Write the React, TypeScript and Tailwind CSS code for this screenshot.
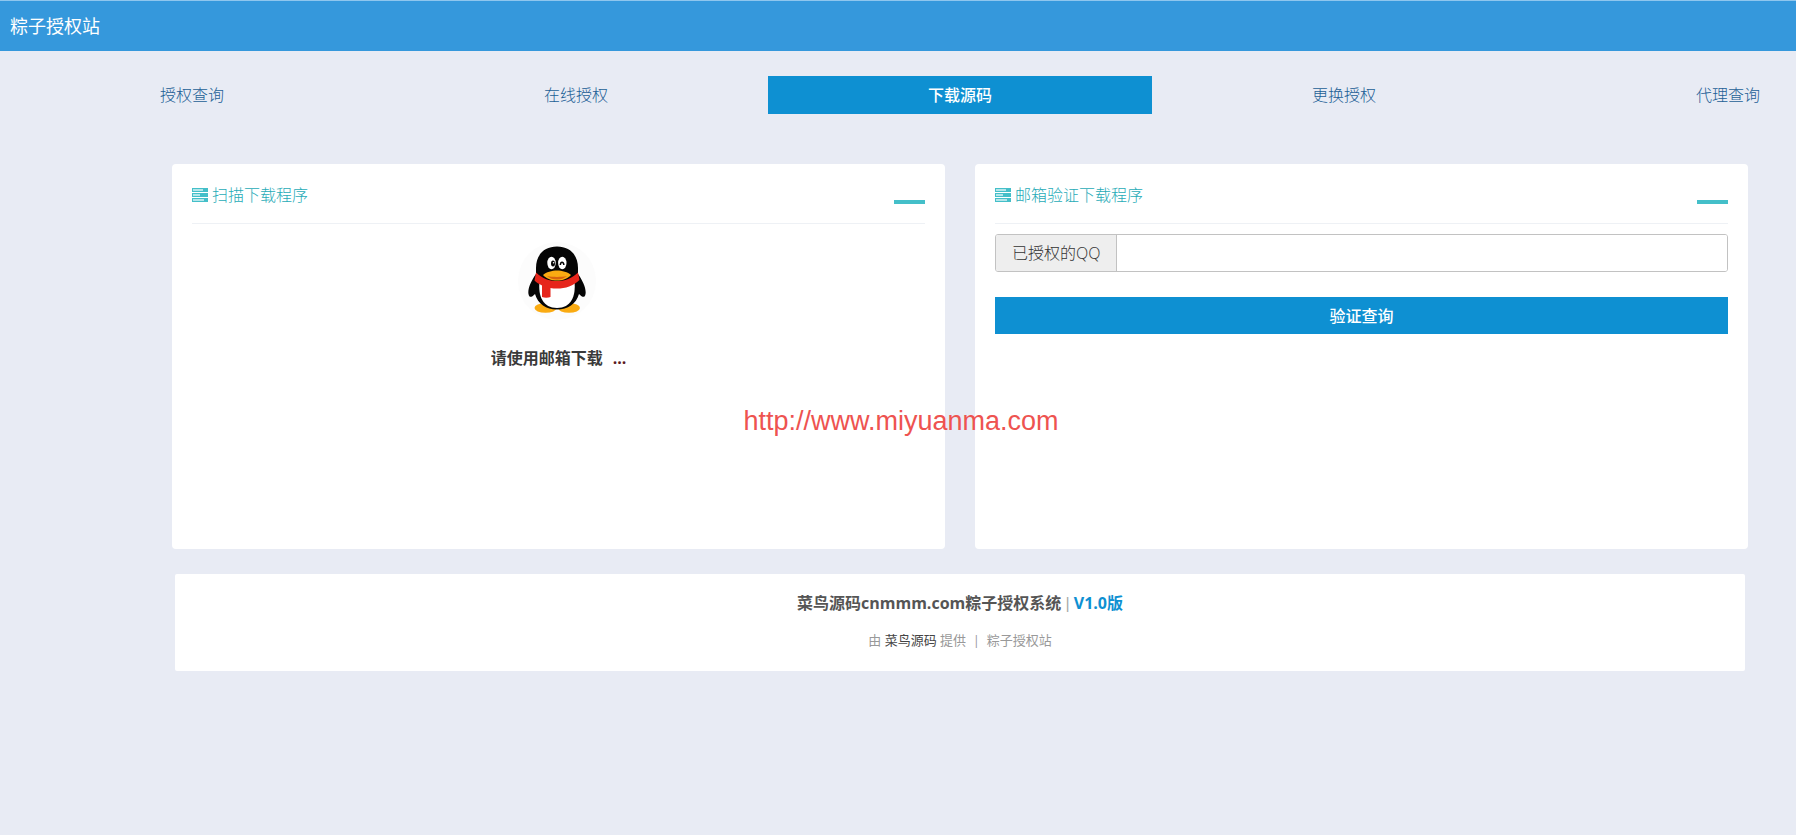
import type { ReactNode } from "react";

const tabs = ["授权查询", "在线授权", "下载源码", "更换授权", "代理查询"];

function TasksIcon() {
  return (
    <svg viewBox="0 0 16 14" className="h-[14px] w-4 shrink-0" aria-hidden="true" shapeRendering="crispEdges">
      <path fill="#44bfc9" d="M0 0h16v4H0zM0 5h16v4H0zM0 10h16v4H0z" />
      <path fill="#b4e6ea" d="M1 1h10v2H1zM1 6h7v2H1zM1 11h11v2H1z" />
    </svg>
  );
}

function Penguin() {
  return (
    <svg viewBox="2 0 84 82" className="h-[82px] w-[84px]" role="img" aria-label="QQ">
      <circle cx="42" cy="41" r="39" fill="#fcfcfc" />
      <ellipse cx="30.500" cy="68" rx="11" ry="4.800" fill="#faab12" />
      <ellipse cx="54" cy="68" rx="11" ry="4.800" fill="#faab12" />
      <path
        fill="#050505"
        d="M42 6.500C29 6.500 21 15 21 28v6C16 41 12.500 49 13.500 54c.6 3.500 2.600 4 6.500 0C23 64 31 69.500 42 69.500S61 64 64 54c4 4 6 3.500 6.500 0C71.500 49 68 41 63 34v-6C63 15 55 6.500 42 6.500z"
      />
      <path fill="#fff" d="M24.500 42C23 56 28 68 42 68s19-12 17.500-26z" />
      <ellipse cx="36.500" cy="23" rx="4.200" ry="6.200" fill="#fff" />
      <ellipse cx="47.300" cy="23" rx="4.200" ry="6.200" fill="#fff" />
      <ellipse cx="38" cy="23.500" rx="2" ry="2.900" fill="#050505" />
      <circle cx="38.600" cy="22.800" r=".8" fill="#fff" />
      <path d="M45.300 25c.4-3.600 3-3.600 3.600 0" fill="none" stroke="#050505" strokeWidth="1.500" />
      <path fill="#faab12" d="M28 35c3-3 9-4.500 14-4.500S53 32 56 35c-3 3.500-8 5.500-14 5.500S31 38.500 28 35z" />
      <path fill="#d8640f" d="M32 36c6 1.200 14 1.200 20 0-3 2.500-6 3.500-10 3.500s-7-1-10-3.500z" />
      <path
        fill="#e6251b"
        d="M21 32.500c6 6 13 8.500 21 8.500s15-2.500 21-8.500l1.500 7.500c-6 6-14 8.500-22.500 8.500-2 0-5 0-6.500-.5v9c-2.500 1-6 1-8.500 0V45.500c-3-1.500-5.500-3-7.500-5z"
      />
    </svg>
  );
}

function Panel({ title, children }: { title: string; children: ReactNode }) {
  return (
    <section className="min-h-[385px] flex-1 rounded-[4px] bg-white px-5 pt-3">
      <div className="flex h-12 items-start justify-between border-b border-[#eef1f5] pt-[7px]">
        <h2 className="flex items-center gap-1 text-[16px] leading-6 font-light text-[#1fabb7]">
          <TasksIcon />
          {title}
        </h2>
        <span className="mt-[17px] h-1 w-[31px] bg-[#44bfc9]" />
      </div>
      {children}
    </section>
  );
}

function Divider() {
  return <span className="font-['Liberation_Sans',sans-serif] text-[#aaa]">|</span>;
}

export default function App() {
  return (
    <div className="relative min-h-screen overflow-hidden bg-[#e8ebf4] font-['Open_Sans','Noto_Sans_CJK_SC',sans-serif]">
      <header className="flex h-[51px] items-center border-t border-[#8fc6ee] bg-[#3598dc] px-[10px]">
        <h1 className="text-[18px] leading-6 text-white">粽子授权站</h1>
      </header>

      <nav className="mt-[25px] flex">
        {tabs.map((tab) => (
          <a
            key={tab}
            href="#"
            className={
              tab === "下载源码"
                ? "flex h-[38px] w-[21.38%] shrink-0 items-center justify-center bg-[#0e90d2] text-[16px] leading-6 font-medium text-white"
                : "flex h-[38px] w-[21.38%] shrink-0 items-center justify-center text-[16px] leading-6 font-light text-[#1c5f96]"
            }
          >
            {tab}
          </a>
        ))}
      </nav>

      <main className="mt-[50px] ml-[172px] mr-12">
        <div className="flex gap-[30px]">
          <Panel title="扫描下载程序">
            <div className="flex flex-col items-center pt-4">
              <Penguin />
              <p className="mt-6 text-[16px] leading-6 font-bold text-[#3a3a3a]">
                请使用邮箱下载
                <span className="ml-[10px] text-[#5c1a22]">...</span>
              </p>
            </div>
          </Panel>
          <Panel title="邮箱验证下载程序">
            <form className="pt-[10px]" onSubmit={(e) => e.preventDefault()}>
              <div className="flex h-[38px] overflow-hidden rounded-[3px] border border-[#c2c2c2]">
                <label
                  htmlFor="qq"
                  className="flex items-center border-r border-[#c2c2c2] bg-[#eee] px-4 text-[16px] leading-6 font-light text-[#333]"
                >
                  已授权的QQ
                </label>
                <input id="qq" type="text" className="min-w-0 flex-1 bg-white px-3 text-[16px] outline-none" />
              </div>
              <button
                type="submit"
                className="mt-[25px] h-[37px] w-full bg-[#0e90d2] text-[16px] leading-6 font-medium text-white"
              >
                验证查询
              </button>
            </form>
          </Panel>
        </div>

        <footer className="mx-[3px] mt-[25px] flex h-[97px] flex-col items-center rounded-[2px] bg-white pt-[17px] text-[#999]">
          <p className="text-[16px] leading-6">
            <strong className="font-bold text-[#555]">菜鸟源码cnmmm.com粽子授权系统</strong> <Divider />{" "}
            <strong className="font-bold text-[#0e90d2]">V1.0版</strong>
          </p>
          <p className="mt-3 text-[13px] leading-6 whitespace-pre">
            由{" "}
            <a href="#" className="text-[#444]">
              菜鸟源码
            </a>
            {" "}提供{"  "}|{"  "}粽子授权站
          </p>
        </footer>
      </main>

      <div className="pointer-events-none absolute inset-x-0 top-[405px] pl-[6px] text-center font-['Liberation_Sans',sans-serif] text-[27px] leading-8 text-[#ee5350]">
        http://www.miyuanma.com
      </div>
    </div>
  );
}
